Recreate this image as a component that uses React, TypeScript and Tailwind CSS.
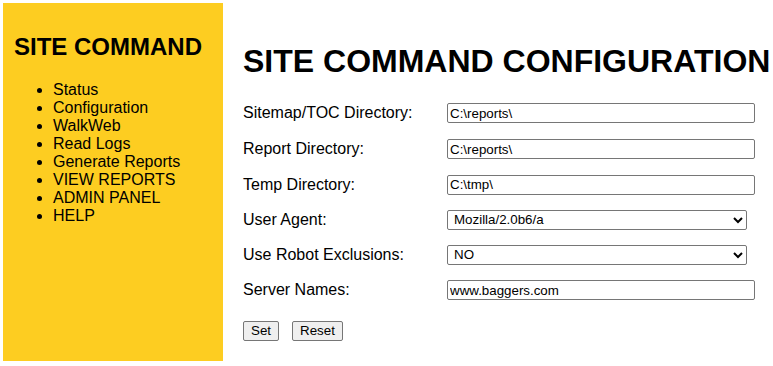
const navItems = [
  "Status",
  "Configuration",
  "WalkWeb",
  "Read Logs",
  "Generate Reports",
  "VIEW REPORTS",
  "ADMIN PANEL",
  "HELP",
];

type Field =
  | { label: string; kind: "text"; value: string; h: string }
  | { label: string; kind: "select"; value: string; options: string[]; h: string };

const fields: Field[] = [
  { label: "Sitemap/TOC Directory:", kind: "text", value: "C:\\reports\\", h: "h-[36px]" },
  { label: "Report Directory:", kind: "text", value: "C:\\reports\\", h: "h-[36px]" },
  { label: "Temp Directory:", kind: "text", value: "C:\\tmp\\", h: "h-[35px]" },
  { label: "User Agent:", kind: "select", value: "Mozilla/2.0b6/a", options: ["Mozilla/2.0b6/a"], h: "h-[35px]" },
  { label: "Use Robot Exclusions:", kind: "select", value: "NO", options: ["NO", "YES"], h: "h-[35px]" },
  { label: "Server Names:", kind: "text", value: "www.baggers.com", h: "h-[36px]" },
];

const inputBase =
  "h-5 rounded-[2px] border border-[#767676] bg-white px-[2px] text-[13.33px] leading-4 text-black outline-none";

const buttonClass =
  "h-5 rounded-[2px] border border-[#767676] bg-[#efefef] px-[7px] text-[13.33px] leading-4";

export default function App() {
  return (
    <div className="flex h-[366px] w-[773px] overflow-hidden bg-white p-[3px] font-['Liberation_Sans',Arial,sans-serif] text-black">
      <aside className="h-[358px] w-[220px] shrink-0 bg-[#fdcd21] px-[11px] pt-[30px]">
        <h2 className="text-[24px] font-bold leading-[27px]">SITE COMMAND</h2>
        <ul className="mt-[21px] list-disc pl-[39px] text-base leading-[18px]">
          {navItems.map((item) => (
            <li key={item}>{item}</li>
          ))}
        </ul>
      </aside>
      <main className="min-w-0 flex-1 pl-[20px]">
        <h1 className="mt-[40px] whitespace-nowrap text-[32px] font-bold leading-[37px]">
          SITE COMMAND CONFIGURATION
        </h1>
        <form className="mt-[15px]">
          {fields.map((field) => (
            <div key={field.label} className={`flex items-center ${field.h}`}>
              <label className="w-[204px] shrink-0 text-base">{field.label}</label>
              {field.kind === "text" ? (
                <input className={`${inputBase} w-[308px]`} defaultValue={field.value} />
              ) : (
                <select className={`${inputBase} w-[300px] px-0`} defaultValue={field.value}>
                  {field.options.map((o) => (
                    <option key={o}>{o}</option>
                  ))}
                </select>
              )}
            </div>
          ))}
          <div className="mt-[13px] flex gap-[13px]">
            <button type="button" className={buttonClass}>
              Set
            </button>
            <button type="button" className={buttonClass}>
              Reset
            </button>
          </div>
        </form>
      </main>
    </div>
  );
}
